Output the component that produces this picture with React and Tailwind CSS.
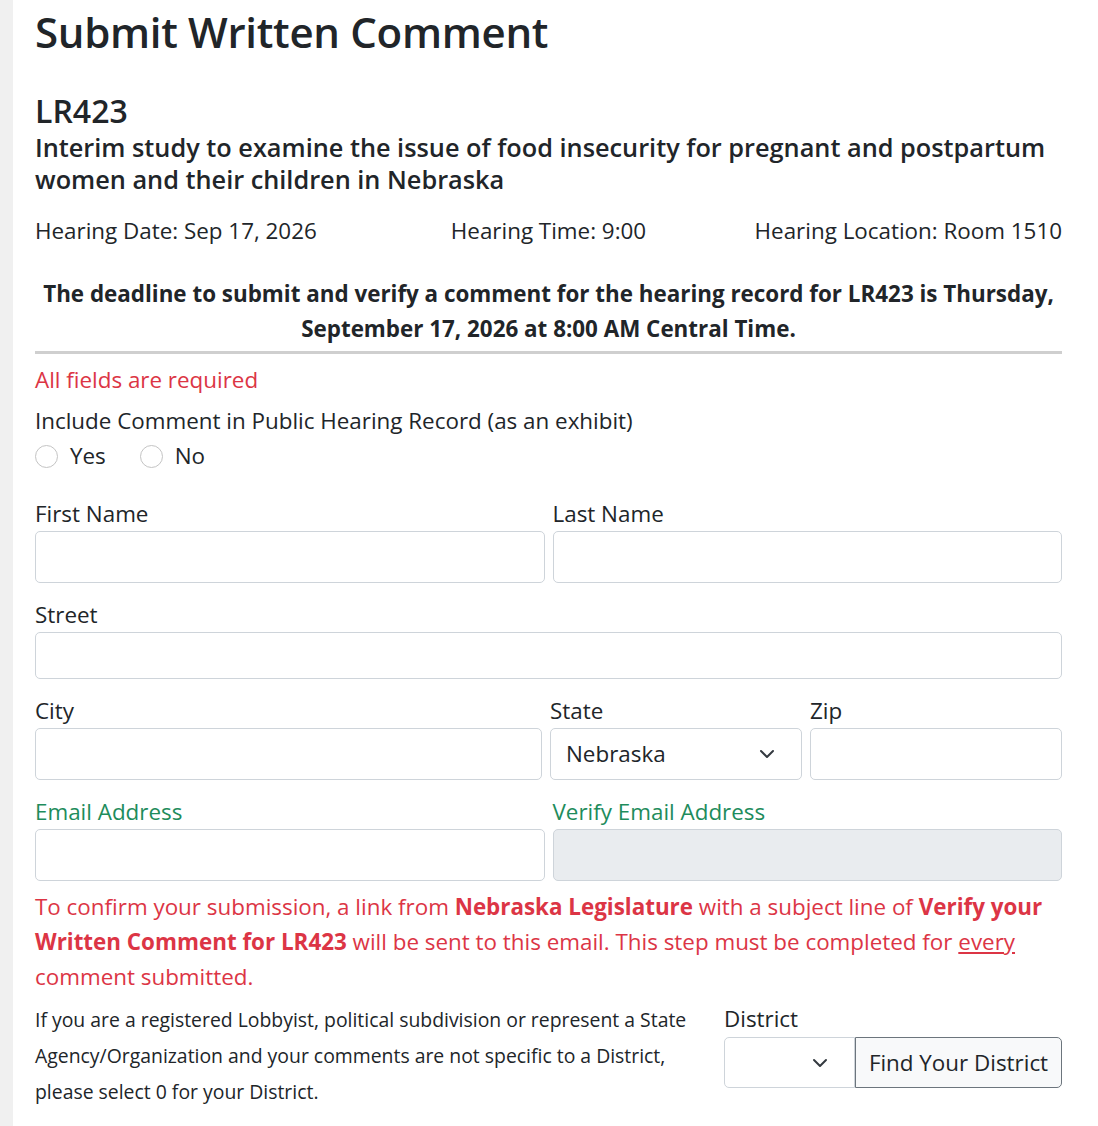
import React from "react";

const Chevron = () => (
  <svg width="16" height="16" viewBox="0 0 16 16" fill="none" stroke="#343a40" strokeWidth="2" strokeLinecap="round" strokeLinejoin="round">
    <path d="M2 5l6 6 6-6" />
  </svg>
);

const Input = ({ h = "h-[52px]", bg = "bg-white" }) => (
  <div className={`${h} ${bg} rounded-[5px] border border-[#ced4da]`} />
);

const Label = ({ children, color = "text-[#212529]", mb = "mb-[3px]" }) => (
  <div className={`text-[22.4px] leading-[28px] ${mb} ${color}`}>{children}</div>
);

export default function App() {
  return (
    <div className="flex min-h-screen bg-white text-[#212529]" style={{ fontFamily: "'Open Sans', 'Noto Sans', sans-serif" }}>
      <div className="w-[13px] shrink-0 bg-[#f0f0f0]" />
      <div className="flex-1 pl-[22px] pr-[36px]">
        <h1 className="text-[42px] leading-[52px] font-semibold pt-[6px] tracking-[-0.3px]">Submit Written Comment</h1>

        <div className="mt-[33px] text-[32px] leading-[40px] font-semibold">LR423</div>
        <div className="text-[25.3px] leading-[32px] font-semibold">
          Interim study to examine the issue of food insecurity for pregnant and postpartum women and their children in Nebraska
        </div>

        <div className="mt-[21px] grid grid-cols-3 text-[22.4px] leading-[30px]">
          <span className="text-left">Hearing Date: Sep 17, 2026</span>
          <span className="text-center">Hearing Time: 9:00</span>
          <span className="text-right">Hearing Location: Room 1510</span>
        </div>

        <div className="mt-[30px] text-center text-[22.4px] leading-[35px] font-bold">
          The deadline to submit and verify a comment for the hearing record for LR423 is Thursday, September 17, 2026 at 8:00 AM Central Time.
        </div>

        <div className="mt-[5px] h-[3px] bg-[#cfcfcf]" />

        <div className="mt-[11px] text-[22.4px] leading-[30px] text-[#dc3545]">All fields are required</div>

        <div className="mt-[11px] text-[22.4px] leading-[30px]">Include Comment in Public Hearing Record (as an exhibit)</div>
        <div className="mt-[5px] flex items-center text-[22.4px] leading-[30px]">
          <span className="w-[23px] h-[23px] rounded-full border border-[#c4c4c4] bg-white" />
          <span className="ml-[12px]">Yes</span>
          <span className="ml-[34px] w-[23px] h-[23px] rounded-full border border-[#c4c4c4] bg-white" />
          <span className="ml-[12px]">No</span>
        </div>

        <div className="mt-[29px] grid grid-cols-2 gap-x-[8px]">
          <div>
            <Label>First Name</Label>
            <Input />
          </div>
          <div>
            <Label>Last Name</Label>
            <Input />
          </div>
        </div>

        <div className="mt-[18px]">
          <Label>Street</Label>
          <Input h="h-[47px]" />
        </div>

        <div className="mt-[18px] grid grid-cols-[1fr_252px_252px] gap-x-[8px]">
          <div>
            <Label>City</Label>
            <Input />
          </div>
          <div>
            <Label>State</Label>
            <div className="h-[52px] rounded-[5px] border border-[#ced4da] bg-white flex items-center justify-between pl-[15px] pr-[26px] text-[22.4px]">
              <span>Nebraska</span>
              <Chevron />
            </div>
          </div>
          <div>
            <Label>Zip</Label>
            <Input />
          </div>
        </div>

        <div className="mt-[18px] grid grid-cols-2 gap-x-[8px]">
          <div>
            <Label color="text-[#1e8c5c]">Email Address</Label>
            <Input />
          </div>
          <div>
            <Label color="text-[#1e8c5c]">Verify Email Address</Label>
            <Input bg="bg-[#e9ecef]" />
          </div>
        </div>

        <p className="mt-[8px] text-[22.4px] leading-[35px] text-[#dc3545]">
          To confirm your submission, a link from <b>Nebraska Legislature</b> with a subject line of <b>Verify your Written Comment for LR423</b> will be sent to this email. This step must be completed for <u>every</u> comment submitted.
        </p>

        <div className="mt-[8px] grid grid-cols-[1fr_338px] gap-x-[24px]">
          <div className="text-[19.4px] leading-[36px]">
            If you are a registered Lobbyist, political subdivision or represent a State Agency/Organization and your comments are not specific to a District, please select 0 for your District.
          </div>
          <div className="pt-[3px]">
            <Label mb="mb-[4px]">District</Label>
            <div className="flex h-[51px]">
              <div className="w-[131px] rounded-l-[5px] border border-[#ced4da] bg-white flex items-center justify-end pr-[26px]">
                <Chevron />
              </div>
              <div className="flex-1 rounded-r-[5px] border border-[#6c757d] bg-[#f8f9fa] flex items-center justify-center text-[22.4px]">
                Find Your District
              </div>
            </div>
          </div>
        </div>
      </div>
    </div>
  );
}
